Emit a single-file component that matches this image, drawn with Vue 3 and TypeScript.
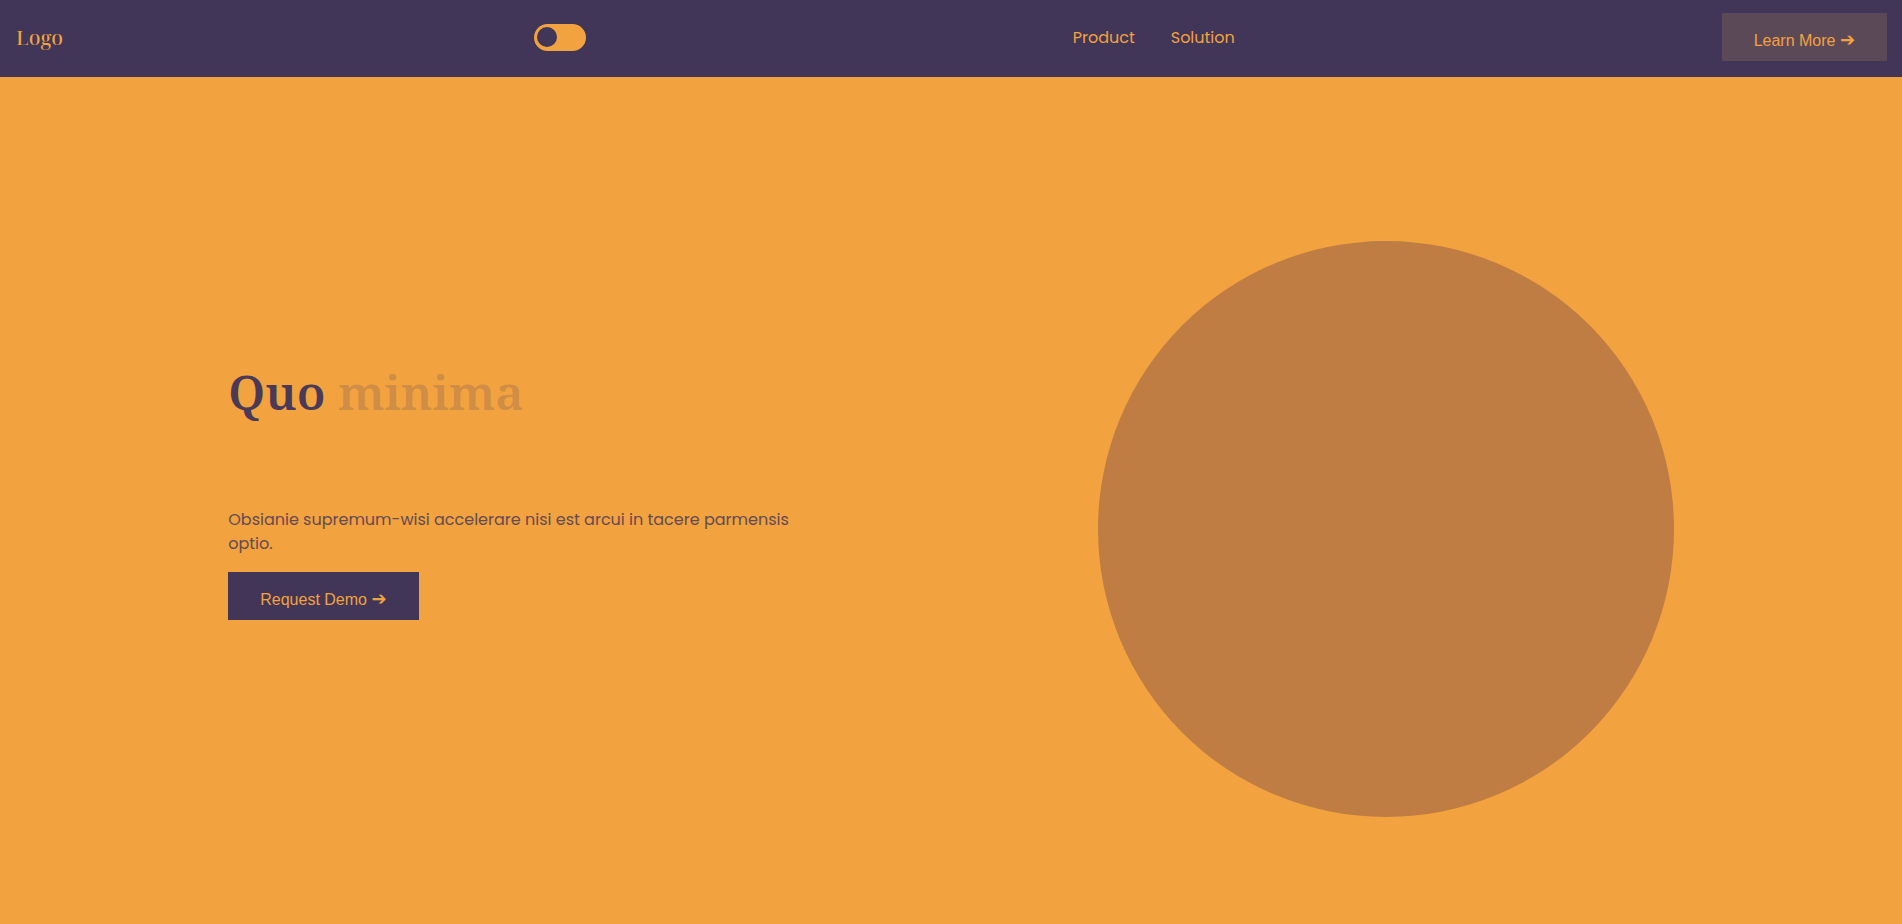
<script setup lang="ts">
import { ref } from 'vue'

const links: string[] = ['Product', 'Solution']
const alternate = ref<boolean>(false)
</script>

<template>
  <div class="page">
    <header class="bar">
      <a class="logo" href="#">Logo</a>
      <input v-model="alternate" class="toggle" type="checkbox" role="switch" aria-label="Switch theme" />
      <nav class="links">
        <a v-for="link in links" :key="link" href="#">{{ link }}</a>
      </nav>
      <button class="button muted" type="button">Learn More <span class="arrow">➔</span></button>
    </header>
    <main class="hero">
      <section class="copy">
        <h1>Quo <span>minima</span></h1>
        <p>Obsianie supremum-wisi accelerare nisi est arcui in tacere parmensis optio.</p>
        <button class="button" type="button">Request Demo <span class="arrow">➔</span></button>
      </section>
      <div class="disc"></div>
    </main>
  </div>
</template>

<style>
body {
  margin: 0;
}
</style>

<style scoped>
.page {
  --dark: #413558;
  --light: #f2a23f;
  display: flex;
  flex-direction: column;
  min-height: 100vh;
  background: var(--light);
  color: var(--dark);
  font-family: Poppins, Inter, sans-serif;
  font-size: 16px;
  line-height: 24px;
}

.bar {
  display: flex;
  justify-content: space-between;
  align-items: center;
  padding: 13px 15px 16px 16px;
  background: var(--dark);
}

.bar a {
  color: var(--light);
  text-decoration: none;
}

.bar .logo {
  padding-top: 2px;
  font-family: "Noto Serif Display", "Liberation Serif", serif;
  font-size: 20px;
  font-weight: 500;
}

.toggle {
  appearance: none;
  width: 52px;
  height: 27px;
  margin: 0;
  padding: 3px;
  box-sizing: border-box;
  border-radius: 14px;
  background: var(--light);
  cursor: pointer;
}

.toggle::before {
  content: "";
  display: block;
  width: 20px;
  height: 20px;
  border-radius: 50%;
  background: var(--dark);
}

.toggle:checked::before {
  margin-left: auto;
}

.links {
  display: flex;
  gap: 36px;
  padding: 2px 16px 0;
}

.button {
  height: 48px;
  padding: 5px 32px 0;
  border: 0;
  background: var(--dark);
  color: var(--light);
  font-family: "Liberation Sans", Arial, sans-serif;
  font-size: 16px;
  cursor: pointer;
}

.arrow {
  font-family: "DejaVu Sans", sans-serif;
  font-size: 18px;
}

.muted {
  background: #5b4957;
}

.hero {
  flex: 1;
  display: flex;
  justify-content: space-between;
  align-items: center;
  padding: 57px 12% 0;
}

.copy {
  width: 40%;
  padding-bottom: 83px;
}

h1 {
  margin: 0 0 80px;
  font-family: "Noto Serif", "Liberation Serif", serif;
  font-size: 48px;
  line-height: 72px;
  font-weight: 600;
  color: #4a3a57;
}

h1 span {
  color: #cf8d45;
}

p {
  margin: 0 0 16px;
  color: #644b54;
}

.disc {
  width: 576px;
  aspect-ratio: 1;
  border-radius: 50%;
  background: #bf7d43;
}
</style>
